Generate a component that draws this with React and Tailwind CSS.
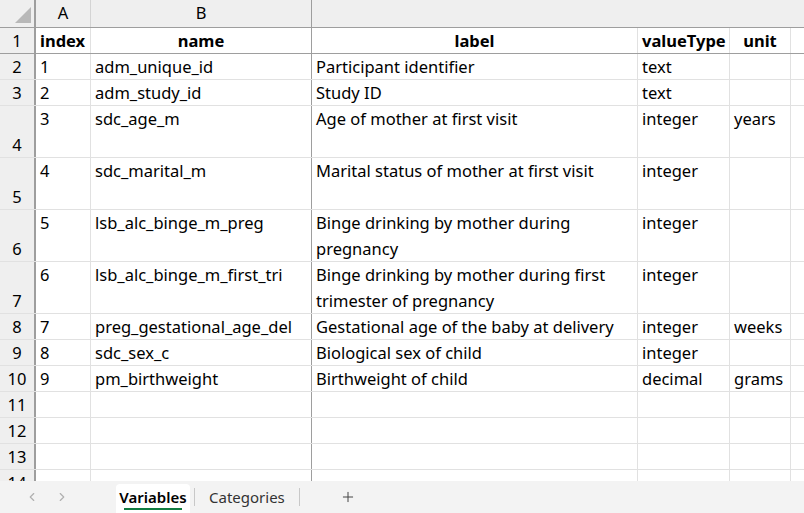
import React from "react";
import { ChevronLeft, ChevronRight, Plus } from "lucide-react";

const rows = [
  { n: 1, h: 26, c: ["index", "name", "label", "valueType", "unit"], bold: true },
  { n: 2, h: 26, c: ["1", "adm_unique_id", "Participant identifier", "text", ""] },
  { n: 3, h: 26, c: ["2", "adm_study_id", "Study ID", "text", ""] },
  { n: 4, h: 52, c: ["3", "sdc_age_m", "Age of mother at first visit", "integer", "years"] },
  { n: 5, h: 52, c: ["4", "sdc_marital_m", "Marital status of mother at first visit", "integer", ""] },
  { n: 6, h: 52, c: ["5", "lsb_alc_binge_m_preg", "Binge drinking by mother during pregnancy", "integer", ""] },
  { n: 7, h: 52, c: ["6", "lsb_alc_binge_m_first_tri", "Binge drinking by mother during first trimester of pregnancy", "integer", ""] },
  { n: 8, h: 26, c: ["7", "preg_gestational_age_del", "Gestational age of the baby at delivery", "integer", "weeks"] },
  { n: 9, h: 26, c: ["8", "sdc_sex_c", "Biological sex of child", "integer", ""] },
  { n: 10, h: 26, c: ["9", "pm_birthweight", "Birthweight of child", "decimal", "grams"] },
  { n: 11, h: 26, c: ["", "", "", "", ""] },
  { n: 12, h: 26, c: ["", "", "", "", ""] },
  { n: 13, h: 26, c: ["", "", "", "", ""] },
  { n: 14, h: 26, c: ["", "", "", "", ""] },
];

const widths = ["w-[55px]", "w-[221px]", "w-[326px]", "w-[92px]", "w-[61px]"];

export default function App() {
  return (
    <div className="w-[804px] h-[513px] bg-white overflow-hidden flex flex-col text-[16.5px] text-black" style={{ fontFamily: '"Noto Sans",sans-serif' }}>
      <div className="flex-1 overflow-hidden">
        <div className="flex h-[28px] bg-[#efefef] border-b border-[#9e9e9e]">
          <div className="w-[36px] shrink-0 border-r-2 border-[#9e9e9e] relative">
            <div className="absolute right-[3px] bottom-[4px] w-0 h-0 border-l-[16px] border-l-transparent border-b-[16px] border-b-[#b8b8b8]" />
          </div>
          <div className="w-[55px] shrink-0 border-r border-[#d4d4d4] flex items-center justify-center">A</div>
          <div className="w-[221px] shrink-0 border-r border-[#9e9e9e] flex items-center justify-center">B</div>
          <div className="flex-1" />
        </div>
        {rows.map((r) => (
          <div key={r.n} className={`flex ${r.n === 1 ? "border-b border-[#9e9e9e]" : "border-b border-[#e1e1e1]"}`} style={{ height: r.h }}>
            <div className="w-[36px] shrink-0 bg-[#efefef] border-r-2 border-[#9e9e9e] flex items-end justify-center leading-[25px]">{r.n}</div>
            {r.c.map((t, i) => (
              <div key={i} className={`${widths[i]} shrink-0 px-[4px] leading-[26px] ${i === 1 ? "border-r border-[#9e9e9e]" : "border-r border-[#e1e1e1]"} ${r.bold ? "font-bold text-center" : ""} ${r.bold && i === 0 ? "text-left" : ""} whitespace-normal overflow-hidden`}>
                {t}
              </div>
            ))}
            <div className="flex-1" />
          </div>
        ))}
      </div>
      <div className="h-[32px] shrink-0 bg-[#f3f3f3] flex items-end text-[15px] text-[#333]">
        <div className="flex items-center h-[32px] w-[116px] pl-[25px] gap-[16px] text-[#b0b0b0]">
          <ChevronLeft size={14} /><ChevronRight size={14} />
        </div>
        <div className="h-[29px] w-[74px] bg-white rounded-t-[4px] flex flex-col items-center justify-center font-semibold text-black">
          <span className="leading-[18px]">Variables</span>
          <div className="w-[58px] h-[2px] bg-[#107c41] mt-[2px]" />
        </div>
        <div className="h-[32px] flex items-center">
          <div className="w-px h-[18px] bg-[#c8c8c8] ml-[4px]" />
          <span className="px-[14px]">Categories</span>
          <div className="w-px h-[18px] bg-[#c8c8c8]" />
          <Plus size={16} strokeWidth={1.5} className="ml-[40px] text-[#444]" />
        </div>
      </div>
    </div>
  );
}
